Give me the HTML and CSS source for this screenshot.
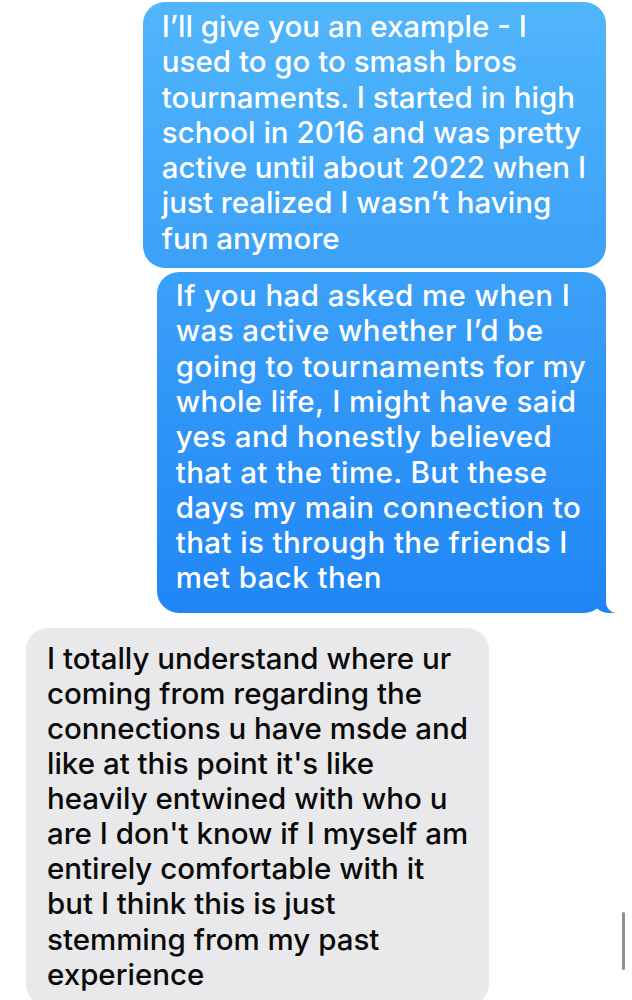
FILE: index.html
```
<!DOCTYPE html>
<html>
<head>
	<meta http-equiv="Content-Type" content="text/html;charset=utf-8"/>
	<title>Messages</title>
	<link rel="stylesheet" href="styles.css">
</head>
<body>
	<div class="thread">
		<div class="bubble me">
			I’ll give you an example - I<br>
			used to go to smash bros<br>
			tournaments. I started in high<br>
			school in 2016 and was pretty<br>
			active until about 2022 when I<br>
			just realized I wasn’t having<br>
			fun anymore
		</div>
		<div class="bubble me tail">
			If you had asked me when I<br>
			was active whether I’d be<br>
			going to tournaments for my<br>
			whole life, I might have said<br>
			yes and honestly believed<br>
			that at the time. But these<br>
			days my main connection to<br>
			that is through the friends I<br>
			met back then
		</div>
		<div class="bubble them">
			I totally understand where ur<br>
			coming from regarding the<br>
			connections u have msde and<br>
			like at this point it's like<br>
			heavily entwined with who u<br>
			are I don't know if I myself am<br>
			entirely comfortable with it<br>
			but I think this is just<br>
			stemming from my past<br>
			experience
		</div>
		<span class="scroll"></span>
	</div>
</body>
</html>
```
FILE: styles.css
```
*{
	margin: 0;
	padding: 0;
	box-sizing: border-box;
}
body{
	background: #fff;
	font-family: Inter, "Liberation Sans", sans-serif;
}
.thread{
	position: relative;
	display: flex;
	flex-direction: column;
	padding: 2px 26px 0 26px;
	height: 1000px;
	overflow: hidden;
}
.bubble{
	position: relative;
	width: fit-content;
	border-radius: 22px;
	font-size: 29.5px;
	font-weight: 500;
	line-height: 35.3px;
	white-space: nowrap;
}
.me{
	align-self: flex-end;
	color: #fff;
	padding: 7px 20px 12px 19px;
	background: linear-gradient(#51b6fb, #1f85f5 620px) fixed;
	margin-bottom: 4px;
}
.me.tail{
	letter-spacing: 0.4px;
	padding-top: 6px;
	padding-bottom: 17px;
}
.me.tail::before{
	content: "";
	position: absolute;
	bottom: 0;
	right: -9px;
	width: 22px;
	height: 24px;
	background: linear-gradient(#51b6fb, #1f85f5 620px) fixed;
	border-bottom-left-radius: 16px 14px;
}
.me.tail::after{
	content: "";
	position: absolute;
	bottom: 0;
	right: -26px;
	width: 26px;
	height: 24px;
	background: #fff;
	border-bottom-left-radius: 11px;
}
.them{
	align-self: flex-start;
	margin-top: 11px;
	color: #0a0a0a;
	background: #e9e9eb;
	font-size: 29.5px;
	line-height: 35.1px;
	letter-spacing: 0;
	padding: 13px 21px 14px 21px;
}
.scroll{
	position: absolute;
	right: 7px;
	top: 912px;
	width: 3px;
	height: 58px;
	border-radius: 2px;
	background: #8e8e8e;
}
```
